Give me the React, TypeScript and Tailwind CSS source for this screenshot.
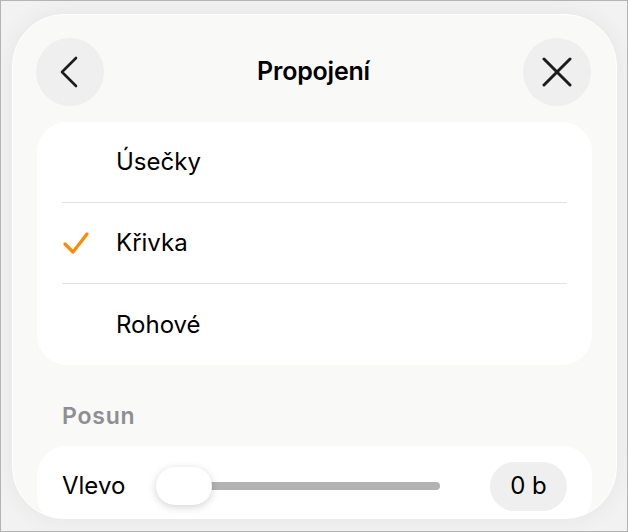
import { useState } from "react";

type Option = { id: string; label: string };

const options: Option[] = [
  { id: "lines", label: "Úsečky" },
  { id: "curve", label: "Křivka" },
  { id: "corner", label: "Rohové" },
];

function Chevron() {
  return (
    <svg width="20" height="32" viewBox="0 0 20 32" fill="none">
      <path d="M17 2 L3 16 L17 30" stroke="#1c1c1e" strokeWidth="2.6" strokeLinecap="round" strokeLinejoin="round" />
    </svg>
  );
}

function Cross() {
  return (
    <svg width="30" height="30" viewBox="0 0 30 30" fill="none">
      <path d="M2 2 L28 28 M28 2 L2 28" stroke="#1c1c1e" strokeWidth="3" strokeLinecap="round" />
    </svg>
  );
}

function Check() {
  return (
    <svg width="28" height="24" viewBox="0 0 28 24" fill="none">
      <path d="M3 13 L11 21 L25 3" stroke="#ff8a00" strokeWidth="3.2" strokeLinecap="round" strokeLinejoin="round" />
    </svg>
  );
}

export default function App() {
  const [selected, setSelected] = useState("curve");

  return (
    <div
      className="w-[628px] h-[532px] bg-[#f2f2f2] border border-[#b4b4b4] pt-[13px] pl-[11px] overflow-hidden"
      style={{ fontFamily: "Inter, 'Noto Sans', sans-serif" }}
    >
      {/* Sheet */}
      <div className="w-[605px] h-[505px] rounded-[52px] bg-[#f9f9f8] border border-white shadow-[0_0_24px_rgba(0,0,0,0.06)] overflow-hidden">
        {/* Header */}
        <div className="flex items-center justify-between pl-[23px] pr-[25px] pt-[23px]">
          <button className="w-[68px] h-[68px] rounded-full bg-[#efefef] flex items-center justify-center pr-[3px]">
            <Chevron />
          </button>
          <h1 className="text-[25px] font-semibold text-black tracking-[-0.2px]">Propojení</h1>
          <button className="w-[68px] h-[68px] rounded-full bg-[#efefef] flex items-center justify-center">
            <Cross />
          </button>
        </div>

        <div className="px-[24px] pt-[16px]">
          {/* Options */}
          <div className="bg-white rounded-[30px]">
            {options.map((o, i) => (
              <div key={o.id} className="px-[25px]">
                <button
                  onClick={() => setSelected(o.id)}
                  className={`w-full h-[81px] flex items-center text-left ${i < options.length - 1 ? "border-b border-[#e3e3e3]" : ""}`}
                >
                  <span className="w-[54px] flex items-center">{selected === o.id && <Check />}</span>
                  <span className="text-[24px] text-black">{o.label}</span>
                </button>
              </div>
            ))}
          </div>

          {/* Offset */}
          <div className="pl-[25px] pt-[38px] pb-[17px] text-[23px] font-semibold text-[#8e8e93] leading-[26px] tracking-[0.8px]">Posun</div>

          <div className="bg-white rounded-[30px] h-[80px] px-[25px] flex items-center">
            <span className="text-[24px] text-black w-[94px]">Vlevo</span>
            <div className="relative w-[284px] h-[38px] flex items-center">
              <div className="ml-[50px] w-[234px] h-[8px] rounded-full bg-[#b3b3b3]" />
              <div className="absolute left-0 top-0 w-[56px] h-[38px] rounded-[19px] bg-white shadow-[0_2px_8px_rgba(0,0,0,0.18)]" />
            </div>
            <div className="ml-auto w-[77px] h-[49px] rounded-full bg-[#efeff0] flex items-center justify-center text-[24px] text-black">
              0 b
            </div>
          </div>
        </div>
      </div>
    </div>
  );
}
